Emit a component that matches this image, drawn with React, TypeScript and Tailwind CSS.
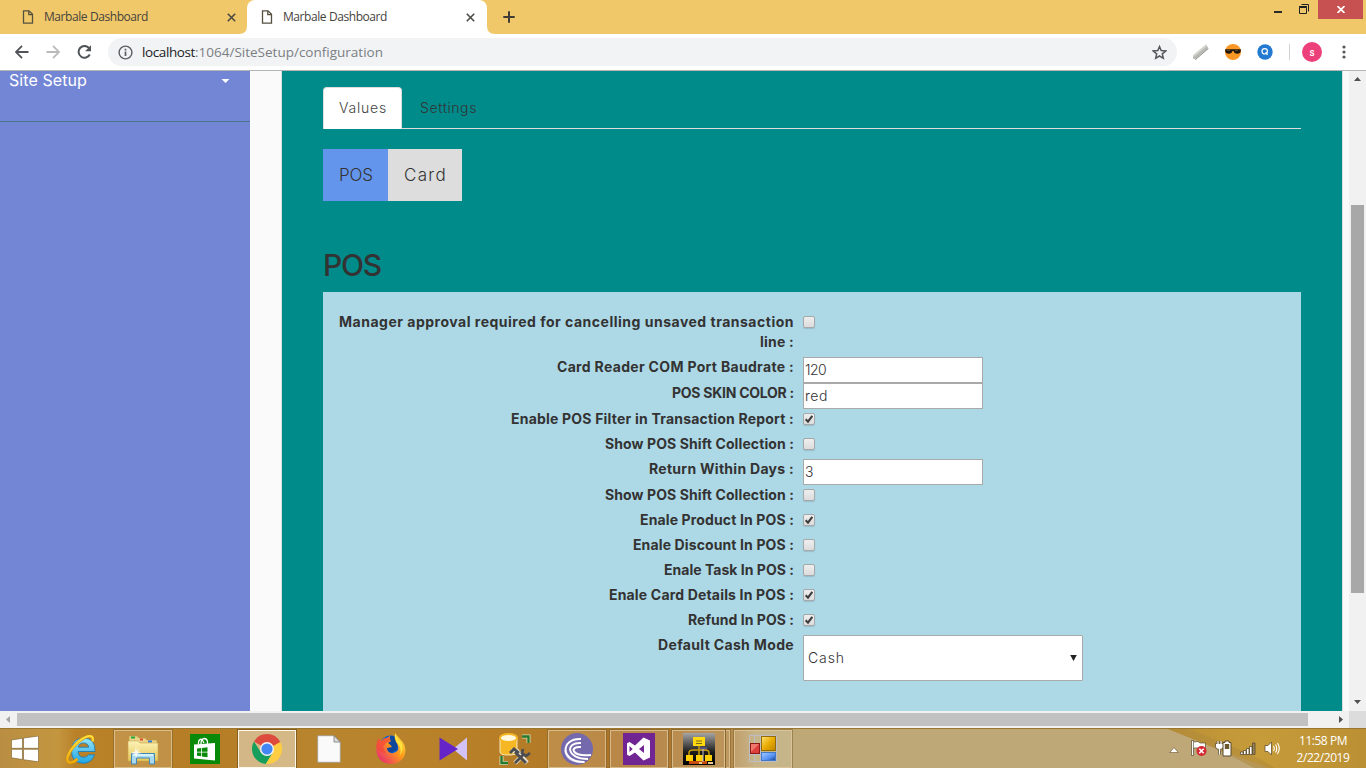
import { useLayoutEffect, useRef, useState } from "react";
import type { ReactNode } from "react";

/** A single line of text whose tracking is adjusted so that it spans `w` pixels. */
function Fit({ w, text, className = "" }: { w: number; text: string; className?: string }) {
  const ref = useRef<HTMLSpanElement>(null);
  const [tracking, setTracking] = useState(0);
  useLayoutEffect(() => {
    const el = ref.current;
    if (el) setTracking((w - el.getBoundingClientRect().width) / text.length);
  }, [w, text]);
  return (
    <span ref={ref} className={`inline-block whitespace-pre ${className}`} style={{ letterSpacing: tracking }}>
      {text}
    </span>
  );
}

function PageIcon() {
  return (
    <svg width="12" height="14" viewBox="0 0 12 14" fill="none" stroke="#54503f" strokeWidth="1.3">
      <path d="M1.5 .8H7L10.5 4.3V13.2H1.5Z" />
      <path d="M6.8 1V4.6H10.4" />
    </svg>
  );
}

function CloseIcon() {
  return (
    <svg width="9" height="9" viewBox="0 0 9 9" stroke="#4b4a45" strokeWidth="1.6">
      <path d="M.8.8 8.2 8.2M8.2.8.8 8.2" />
    </svg>
  );
}

function TabStrip() {
  return (
    <header className="flex h-[34px] shrink-0 bg-[#f0c869] font-['Open_Sans',sans-serif] text-xs text-[#45433c]">
      <div className="flex w-[247px] items-center pl-[22px]">
        <PageIcon />
        <span className="ml-2.5 flex-1"><Fit w={104} text="Marbale Dashboard" /></span>
        <CloseIcon />
        <svg className="ml-[3px] self-end" width="8" height="8" viewBox="0 0 8 8"><path d="M8 0V8H0Q8 8 8 0" fill="#fff" /></svg>
      </div>
      <div className="flex w-60 items-center rounded-t-lg bg-white pl-3.5 pr-3">
        <PageIcon />
        <span className="ml-2.5 flex-1"><Fit w={104} text="Marbale Dashboard" /></span>
        <CloseIcon />
      </div>
      <svg className="self-end" width="8" height="8" viewBox="0 0 8 8"><path d="M0 0V8H8Q0 8 0 0" fill="#fff" /></svg>
      <svg className="ml-2 mt-[11px]" width="12" height="12" viewBox="0 0 12 12" stroke="#3f3d36" strokeWidth="2"><path d="M6 .3V11.7M.3 6H11.7" /></svg>
      <div className="ml-auto flex">
        <svg className="mr-[17px] mt-[11px]" width="8" height="2"><rect width="8" height="2" fill="#2a2a26" /></svg>
        <svg className="mr-[9px] mt-1" width="10" height="10" viewBox="0 0 10 10" fill="none" stroke="#222">
          <path d="M2.5.5H9.5V7.5" /><path d="M.5 3.5H7.5V9.5H.5Z" /><path d="M0 2.7H8" strokeWidth="1.4" />
        </svg>
        <div className="mr-[3px] flex h-[19px] w-[45px] items-center justify-center bg-[#c75050]">
          <svg width="8" height="7" viewBox="0 0 8 7" stroke="#fff" strokeWidth="1.7"><path d="M.5 0 7.5 7M7.5 0 .5 7" /></svg>
        </div>
      </div>
    </header>
  );
}

function Toolbar() {
  return (
    <div className="flex h-[37px] shrink-0 items-center border-b border-[#b4b6b5] bg-white pl-[15px]">
      <svg width="14" height="14" viewBox="0 0 14 14" fill="none" stroke="#505357" strokeWidth="1.8"><path d="M13.5 7H1.2M7 .9.9 7 7 13.1" /></svg>
      <svg className="ml-[17px]" width="14" height="14" viewBox="0 0 14 14" fill="none" stroke="#b8babc" strokeWidth="1.8"><path d="M.5 7H12.8M7 .9 13.1 7 7 13.1" /></svg>
      <svg className="ml-[17px]" width="14" height="14" viewBox="0 0 14 14"><path d="M12.200 9.500A5.900 5.900 0 1 1 11.3 2.900" fill="none" stroke="#505357" strokeWidth="2" transform="translate(.6)" /><path d="M14 .3V6.2H8.100Z" fill="#505357" /></svg>
      <div className="ml-[17px] flex h-7 w-[1069px] items-center rounded-full bg-[#f1f3f4] pl-2.5 pr-[10px]">
        <svg width="15" height="15" viewBox="0 0 15 15" fill="none" stroke="#5b5e62" strokeWidth="1.4"><circle cx="7.5" cy="7.5" r="6.4" /><path d="M7.5 6.5V11M7.5 3.8V5.4" strokeWidth="1.7" /></svg>
        <span className="ml-[9px] flex font-['Open_Sans',sans-serif] text-[13.5px] leading-5">
          <Fit w={53} text="localhost" className="text-[#202124]" />
          <Fit w={188} text=":1064/SiteSetup/configuration" className="text-[#7b7f84]" />
        </span>
        <svg className="ml-auto" width="15" height="15" viewBox="0 0 15 15" fill="none" stroke="#55585c" strokeWidth="1.5"><path d="M7.5 1.6 9.2 5.6 13.7 6 10.3 8.9 11.3 13.3 7.5 11 3.7 13.3 4.7 8.9 1.3 6 5.8 5.6Z" /></svg>
      </div>
      <svg className="ml-[15px]" width="17" height="16" viewBox="0 0 17 16"><path d="M1 11.5 14 .5 16.3 4 3.2 15.2 1 14.5Z" fill="#b9b9b4" /><path d="M1 11.5 14 .5 15 2 1.7 13Z" fill="#d6d6d0" /><path d="M3.2 15.2 16.3 4V5L3.4 16Z" fill="#858580" /></svg>
      <svg className="ml-4" width="16" height="16" viewBox="0 0 16 16"><circle cx="8" cy="8" r="8" fill="#fb9723" /><path d="M.2 5.2H15.8V7Q15.5 9.7 12.2 9.7 9.2 9.7 8.6 7H7.4Q6.8 9.7 3.8 9.7.5 9.7.2 7Z" fill="#20170f" /><path d="M2 6.3H5M10 6.3H13" stroke="#8c643a" strokeWidth=".7" /></svg>
      <svg className="ml-4" width="16" height="16" viewBox="0 0 16 16"><circle cx="8" cy="8" r="7.7" fill="#2479d0" /><circle cx="7.7" cy="7.3" r="2.700" fill="none" stroke="#fff" strokeWidth="1.200" /><path d="M8.6 8.3 10.600 10.800" stroke="#fff" strokeWidth="1.200" /></svg>
      <div className="ml-4 h-4 w-px bg-[#cfd1d4]" />
      <div className="ml-3 flex size-5 items-center justify-center rounded-full bg-[#ec407a] font-['Roboto',sans-serif] text-[10px] font-medium text-white">s</div>
      <svg className="ml-[20px]" width="4" height="14" viewBox="0 0 4 14" fill="#55585c"><circle cx="2" cy="2" r="1.6" /><circle cx="2" cy="7" r="1.6" /><circle cx="2" cy="12" r="1.6" /></svg>
    </div>
  );
}

function Check({ on }: { on: boolean }) {
  return (
    <span className="mt-1 flex size-3 items-center justify-center rounded-[2px] border border-[#a6a8a9] bg-linear-to-b from-[#eeeeee] to-[#dcdcdc] shadow-[0_1px_1px_rgba(0,0,0,0.12)]">
      {on && (
        <svg width="10" height="10" viewBox="0 0 10 10" className="shrink-0"><path d="M1.7 5.3 4 7.7 8.3 1.9" fill="none" stroke="#3c3c3c" strokeWidth="2.1" /></svg>
      )}
    </span>
  );
}

type Row = { label: string; w: number; value: boolean | string };
const rows: Row[] = [
  { label: "Card Reader COM Port Baudrate :", w: 237, value: "120" },
  { label: "POS SKIN COLOR :", w: 122, value: "red" },
  { label: "Enable POS Filter in Transaction Report :", w: 283, value: true },
  { label: "Show POS Shift Collection :", w: 189, value: false },
  { label: "Return Within Days :", w: 145, value: "3" },
  { label: "Show POS Shift Collection :", w: 189, value: false },
  { label: "Enale Product In POS :", w: 154, value: true },
  { label: "Enale Discount In POS :", w: 161, value: false },
  { label: "Enale Task In POS :", w: 130, value: false },
  { label: "Enale Card Details In POS :", w: 185, value: true },
  { label: "Refund In POS :", w: 106, value: true },
];
const valueWidth: Record<string, number> = { "120": 21, red: 23, "3": 8 };

function FormRow({ label, children }: { label: ReactNode; children: ReactNode }) {
  return (
    <div className="flex items-start gap-[9px]">
      <div className="mb-[5px] flex w-[455px] shrink-0 flex-col items-end text-sm font-bold leading-5">{label}</div>
      {children}
    </div>
  );
}

function ConfigForm() {
  return (
    <div className="flex-1 bg-[#add8e6] pl-4 pt-5">
      <FormRow
        label={<><Fit w={455} text="Manager approval required for cancelling unsaved transaction" /><Fit w={34} text="line :" /></>}
      >
        <Check on={false} />
      </FormRow>
      {rows.map((r, i) => (
        <FormRow key={i} label={<Fit w={r.w} text={r.label} />}>
          {typeof r.value === "boolean" ? (
            <Check on={r.value} />
          ) : (
            <div className="h-[26px] w-[180px] border border-[#a9a9a9] bg-white pl-px text-sm font-light leading-6">
              <Fit w={valueWidth[r.value]} text={r.value} />
            </div>
          )}
        </FormRow>
      ))}
      <FormRow label={<Fit w={136} text="Default Cash Mode" />}>
        <div className="flex h-[46px] w-[280px] items-center justify-between rounded-[1px] border border-[#a9a9a9] bg-white pl-1 pr-[5px] text-sm font-light">
          <Fit w={37} text="Cash" />
          <svg width="7" height="6" viewBox="0 0 7 6"><path d="M.2 0H6.8L3.5 6Z" fill="#222" /></svg>
        </div>
      </FormRow>
    </div>
  );
}

function Page() {
  return (
    <div className="flex min-h-0 flex-1 overflow-hidden bg-[#fafafa] font-['Inter',sans-serif] text-[#333]">
      <aside className="w-[250px] shrink-0 bg-[#7386d5] text-white">
        <div className="flex h-[51px] items-start justify-between border-b border-[#47748b] pl-[9px] pr-5 text-base leading-[19px]">
          <Fit w={78} text="Site Setup" />
          <svg className="mt-2" width="9" height="4" viewBox="0 0 9 4"><path d="M.5 0H8.5L4.5 4Z" fill="#fff" /></svg>
        </div>
      </aside>
      <main className="ml-[31px] flex w-[1062px] shrink-0 flex-col border-x border-[#ddd] bg-[#008b8b] pl-[41px] pr-[41px] pt-4">
        <div className="flex h-[42px] shrink-0 border-b border-[#ddd] text-[14px] font-light leading-[41px]">
          <div className="h-[42px] w-[79px] rounded-t border border-b-0 border-[#ddd] bg-white pl-[15px] leading-[39px] text-[#444]"><Fit w={48} text="Values" /></div>
          <div className="pl-[18px]"><Fit w={57} text="Settings" /></div>
        </div>
        <div className="mt-5 flex h-[52px] shrink-0 text-[17px] font-light leading-[52px]">
          <div className="w-[65px] bg-[#6495ed] pl-4"><Fit w={34} text="POS" /></div>
          <div className="w-[74px] bg-[#ddd] pl-4"><Fit w={43} text="Card" /></div>
        </div>
        <h2 className="mt-12 mb-[10px] h-[33px] shrink-0 text-[30px] font-medium leading-[33px]"><Fit w={58} text="POS" /></h2>
        <ConfigForm />
      </main>
      <div className="ml-auto flex w-[17px] shrink-0 flex-col items-center bg-[#f1f1f1] pt-1.5">
        <svg width="7" height="4" viewBox="0 0 7 4"><path d="M3.5 0 7 4H0Z" fill="#505050" /></svg>
        <div className="mt-[124px] h-[388px] w-[13px] bg-[#a8a8a8]" />
        <svg className="mb-[7px] mt-auto" width="7" height="4" viewBox="0 0 7 4"><path d="M3.5 4 7 0H0Z" fill="#505050" /></svg>
      </div>
    </div>
  );
}

function HorizontalBar() {
  return (
    <div className="flex h-[17px] shrink-0 items-center bg-[#f1f1f1] pl-1.5">
      <svg width="4" height="7" viewBox="0 0 4 7"><path d="M0 3.5 4 0V7Z" fill="#a3a3a3" /></svg>
      <div className="ml-[7px] h-[13px] w-[1291px] bg-[#c1c1c1]" />
      <svg className="ml-[31px]" width="4" height="7" viewBox="0 0 4 7"><path d="M4 3.5 0 0V7Z" fill="#505050" /></svg>
      <div className="ml-auto h-full w-[17px] bg-[#dcdcdc]" />
    </div>
  );
}

function IeIcon() {
  return (
    <svg width="32" height="32" viewBox="0 0 32 32">
      <defs>
        <linearGradient id="ie" x2="0" y2="1"><stop stopColor="#95e5fb" /><stop offset="1" stopColor="#20a5e2" /></linearGradient>
        <linearGradient id="ring" x2="0" y2="1"><stop stopColor="#ffdf3a" /><stop offset="1" stopColor="#efad0c" /></linearGradient>
      </defs>
      <path d="M30 18.500H13Q13.500 24.300 18.500 24.300 22 24.300 23.600 21.800H29.500Q26.500 30.300 18.300 30.300 6.500 30 6.500 17.500 7 5.300 18.500 5 30.500 5.300 30 18.500ZM13.200 14.200H23.800Q23 10 18.400 10 14.100 10 13.200 14.200Z" fill="url(#ie)" stroke="#1778b5" strokeWidth=".8" />
      <path d="M27.500 8.500C29.500 1.500 23 1.500 15 7.500 5 15.500 0 26 3.300 29 5.500 30.500 9.500 28.500 12.500 26" fill="none" stroke="#c4870c" strokeWidth="3.200" />
      <path d="M27.500 8.500C29.500 1.500 23 1.500 15 7.500 5 15.500 0 26 3.300 29 5.500 30.500 9.500 28.500 12.500 26" fill="none" stroke="url(#ring)" strokeWidth="2.300" />
    </svg>
  );
}

function ExplorerIcon() {
  return (
    <svg width="34" height="32" viewBox="0 0 34 32">
      <defs><linearGradient id="folder" x2="0" y2="1"><stop stopColor="#fdf3b8" /><stop offset="1" stopColor="#e6c858" /></linearGradient></defs>
      <path d="M3 3H11L13 5H19L21 7H31V18H3Z" fill="#ead388" stroke="#b9973f" strokeWidth=".6" />
      <path d="M5 4.500H9" stroke="#1ea83d" strokeWidth="2" /><path d="M14 6.500H17" stroke="#e04a32" strokeWidth="2" /><path d="M22 8.500H26" stroke="#2f7bd8" strokeWidth="2" />
      <path d="M2 8H12L14 10H32V28H2Z" fill="url(#folder)" stroke="#c6a548" strokeWidth=".6" />
      <path d="M5.500 20.500H28.500V31H23.500V25H10.500V31H5.500Z" fill="#a9daee" stroke="#4287b5" />
      <path d="M7 22H27" stroke="#e2f7fd" strokeWidth="1.500" />
      <path d="M10 13 10.800 18 14 15 11.800 19 16 20 11.500 20.700 10 25 9 21 5 20 9 18.500Z" fill="#fff" opacity=".85" />
    </svg>
  );
}

function StoreIcon() {
  return (
    <svg width="30" height="30" viewBox="0 0 30 30">
      <rect width="30" height="30" fill="#088a08" />
      <path d="M4 10.500 25 9V26.500L4 24.500Z" fill="#fff" />
      <path d="M8.500 10V8Q9.500 4.500 12 5.500L14 9M11 10Q11 4.500 14.500 4.500 18 5 17.500 10" fill="none" stroke="#fff" strokeWidth="1.300" />
      <path d="M7 14.500 11.200 14V17.700H7ZM12 13.900 17.500 13.200V17.700H12ZM7 18.500H11.200V22.300L7 21.800ZM12 18.500H17.500V23.200L12 22.500Z" fill="#088a08" />
    </svg>
  );
}

function ChromeIcon() {
  return (
    <svg width="30" height="30" viewBox="0 0 30 30">
      <path d="M15 15 2 7.500A15 15 0 0 1 28.200 8H15Z" fill="#dd4b3e" />
      <path d="M2 7.500A15 15 0 0 0 13.800 30L21 18.500 9 18.500Z" fill="#169f5c" />
      <path d="M28.200 8A15 15 0 0 1 13.800 30L21.200 18 19 8Z" fill="#fecd42" />
      <path d="M15 8H28.200L21 12Z" fill="#dd4b3e" />
      <circle cx="15" cy="15" r="7" fill="#f3f3f3" /><circle cx="15" cy="15" r="5.600" fill="#4387f5" />
    </svg>
  );
}

function DocIcon() {
  return (
    <svg width="24" height="28" viewBox="0 0 24 28"><path d="M.7.700H17L23.300 7V27.300H.7Z" fill="#fafafa" stroke="#9f9b93" strokeWidth=".8" /><path d="M17 .700V7H23.300Z" fill="#ddd" stroke="#777" strokeWidth=".8" /></svg>
  );
}

function FirefoxIcon() {
  return (
    <svg width="30" height="31" viewBox="0 0 30 31">
      <defs>
        <linearGradient id="fox" x1="1" x2="0" y2="1"><stop stopColor="#fff04a" /><stop offset=".45" stopColor="#ff9818" /><stop offset="1" stopColor="#e31587" /></linearGradient>
      </defs>
      <circle cx="15" cy="14" r="11.500" fill="#075fd8" />
      <path d="M12 4Q17 1 22 7L21 17 14 20 9 14Z" fill="#16305f" opacity=".5" />
      <path d="M3 5 5 8Q8 5 11 5L14 3Q13 6 15 8L12 10Q15 12 16 14L11 15Q11 19 15 20 19 21 22 17 23 13 20 9 18 5 19 0 23 5 25 7 29 11 29.500 17 29 29 16 31 3 31 .500 19 0 11 3 5Z" fill="url(#fox)" />
      <path d="M1 17Q-1 9 3 5L5 8Q8 5 11 5L14 3Q13 6 15 8L10 10 7 14 10 21Z" fill="#f3443c" opacity=".7" />
      <path d="M19 0Q20 5 25 9 29 17 23 24 27 17 22 11 18 6 19 0Z" fill="#ffe33f" />
    </svg>
  );
}

function PlayerIcon() {
  return (
    <svg width="28" height="24" viewBox="0 0 28 24"><path d="M28 .5V23.500L14 12Z" fill="#d2c2f5" /><path d="M.5.500 19 12 .5 23.500Z" fill="#6424c8" /></svg>
  );
}

function DatabaseIcon() {
  return (
    <svg width="32" height="32" viewBox="0 0 32 32">
      <path d="M1 5V19Q1 22 9.500 22 18 22 18 19V5Z" fill="#f5b824" stroke="#f8e6bb" />
      <ellipse cx="9.500" cy="5" rx="8.500" ry="4" fill="#fff7de" stroke="#f5b824" strokeWidth="1.800" />
      <path d="M23 3.500H29.500V10" fill="none" stroke="#d8d7af" strokeWidth="4" /><path d="M23 3.500H29.500V10" fill="none" stroke="#25792c" strokeWidth="2.300" />
      <path d="M2.500 23V30H9" fill="none" stroke="#d8d7af" strokeWidth="4" /><path d="M2.500 23V30H9" fill="none" stroke="#25792c" strokeWidth="2.300" />
      <g fill="none" stroke="#e8dfcc" strokeWidth="4.500"><path d="M12 18 18 18 28 30M16 30 24 22" /></g>
      <g fill="none" stroke="#4b4d50" strokeWidth="2.800"><path d="M11 20 15 16 20 20M16 19 27 30M16 30 25 21M24 16 23 20 27 23 31 20" /></g>
    </svg>
  );
}

function TorrentIcon() {
  return (
    <svg width="32" height="32" viewBox="0 0 32 32" fill="none">
      <circle cx="16" cy="16" r="16" fill="#7469ad" />
      <g stroke="#fff" strokeWidth="1.900"><path d="M20 6C-1 5-1 29 23 29" /><path d="M20 10C4 9 5 26 27 26" /><path d="M20 14C8 13 10 24 30 22" /><path d="M24 29Q6 30 4 17" opacity=".6" /></g>
    </svg>
  );
}

function StudioIcon() {
  return (
    <svg width="32" height="32" viewBox="0 0 32 32"><rect width="32" height="32" fill="#702593" /><path fillRule="evenodd" d="M20.500 4.500 27 7.500V24.500L20.500 27.500 12 19.500 6.500 23 4 21.700V10.300L6.500 9 12 12.500ZM21 12 16 16 21 20ZM6.500 13V19L9.700 16Z" fill="#fff" /></svg>
  );
}

function NetworkIcon() {
  return (
    <svg width="32" height="32" viewBox="0 0 32 32">
      <defs><linearGradient id="net" x2="0" y2="1"><stop stopColor="#a5a5a5" /><stop offset=".6" stopColor="#1a1a1a" /><stop offset="1" /></linearGradient></defs>
      <rect width="32" height="32" fill="url(#net)" />
      <path d="M17 14H24V18H17Z" fill="#57527e" />
      <path d="M16 13V22M6 22V20Q6 17 10 17H22Q26 17 26 20V22" fill="none" stroke="#c79c0d" strokeWidth="1.500" />
      <rect x="10" y="4" width="12" height="9" fill="#ffd810" /><path d="M13 8H19M13 10.500H19" stroke="#776a1b" />
      <path d="M6 28H24V31H6Z" fill="#c84c10" />
      <path d="M3 22H10V28H3ZM13 22H20V28H13ZM22 22H29V28H22Z" fill="#ffcf05" />
      <path d="M20 16V29" stroke="#c9c1c6" /><path d="M16 30H19M25 30H30" stroke="#e8ce8c" strokeWidth="2" />
    </svg>
  );
}

function FormsIcon() {
  return (
    <svg width="28" height="27" viewBox="0 0 28 27">
      <defs>
        <linearGradient id="gold" x2="1" y2="1"><stop stopColor="#ffe475" /><stop offset=".5" stopColor="#eaac04" /><stop offset="1" stopColor="#bd8500" /></linearGradient>
        <linearGradient id="blue" x2="1" y2="1"><stop stopColor="#a5cbff" /><stop offset=".6" stopColor="#5592f4" /><stop offset="1" stopColor="#173f91" /></linearGradient>
      </defs>
      <path d="M.5.500H27.500V26.500H.5ZM5.500 0V8M5.500 19V27M11.500 0V27M0 19.500H12" fill="none" stroke="#bdbdc6" />
      <rect x="12.500" y="1.500" width="14" height="14" fill="url(#gold)" stroke="#936b00" />
      <rect x="1.500" y="8.500" width="9" height="10" fill="#dc3f3a" stroke="#8e1717" /><path d="M2 9H10L2 17Z" fill="#f58e82" opacity=".7" />
      <rect x="12.500" y="17.500" width="14" height="8" fill="url(#blue)" stroke="#4377c8" />
    </svg>
  );
}

type Task = { icon: ReactNode; state?: "open" | "active"; stacked?: boolean };
const tasks: Task[] = [
  { icon: <IeIcon /> },
  { icon: <ExplorerIcon />, state: "open" },
  { icon: <StoreIcon /> },
  { icon: <ChromeIcon />, state: "active" },
  { icon: <DocIcon /> },
  { icon: <FirefoxIcon /> },
  { icon: <PlayerIcon /> },
  { icon: <DatabaseIcon /> },
  { icon: <TorrentIcon />, state: "open" },
  { icon: <StudioIcon />, state: "open" },
  { icon: <NetworkIcon />, state: "open", stacked: true },
  { icon: <FormsIcon />, state: "open" },
];

const stateClass = {
  open: "border-[#e0c79a]/80 bg-white/15 outline-[#7c5d2b]/50",
  active: "border-[#fff8e8] bg-[#e0ceae]/70 outline-[#6d4f20]/70",
};

function TaskButton({ icon, state, stacked }: Task) {
  return (
    <div className="flex w-[62px] items-center justify-center">
      <div className={`flex h-[38px] items-center justify-center ${stacked ? "w-[53px]" : "w-[58px]"} ${state ? `border outline ${stateClass[state]}` : ""}`}>{icon}</div>
      {stacked && <div className="ml-px h-[38px] w-1 border-y border-r border-[#e0c79a]/80 bg-white/15 outline outline-[#7c5d2b]/50" />}
    </div>
  );
}

function Tray() {
  return (
    <div className="ml-auto flex items-center">
      <svg className="mt-0.5" width="10" height="6" viewBox="0 0 10 6"><path d="M5 .5 9.300 5.500H.7Z" fill="#fff" stroke="#66512d" strokeWidth=".6" /></svg>
      <svg className="ml-3" width="16" height="17" viewBox="0 0 16 17">
        <path d="M1.500.500V15.500" stroke="#514226" strokeWidth="3" /><path d="M2.500 2 7 1.500 9 3H14.500V9L8.500 9.500 6.500 8H2.500Z" fill="#fff" stroke="#594a2c" strokeWidth=".7" /><path d="M1.500 1V15" stroke="#fff" strokeWidth="1.500" />
        <circle cx="10.500" cy="11" r="5" fill="#d62631" /><path d="M8.300 8.800 12.700 13.200M12.700 8.800 8.300 13.200" stroke="#fff" strokeWidth="1.600" />
      </svg>
      <svg className="ml-2" width="17" height="17" viewBox="0 0 17 17">
        <g fill="none" stroke="#594a2c" strokeWidth="2.600"><path d="M3 1V4M6 1V4M4.500 8V14.500" /></g>
        <path d="M.5 3.500H8.500V7Q8 9.500 4.500 9.500 1 9.500.5 7Z" fill="#fff" stroke="#594a2c" strokeWidth=".8" />
        <path d="M3 1V4M6 1V4M4.500 8.500V14.500" stroke="#fff" strokeWidth="1.200" />
        <path d="M8 2.500H10V1H14V2.500H16V16H8Z" fill="#fff" stroke="#594a2c" /><path d="M9.800 4H14.200V9H9.800Z" fill="#6b552d" />
      </svg>
      <svg className="ml-2" width="16" height="13" viewBox="0 0 16 13" fill="#fff" stroke="#594a2c" strokeWidth=".8"><path d="M.5 10H3V12.500H.5ZM3.500 8.500H6V12.500H3.500ZM6.500 6.500H9V12.500H6.500ZM9.500 4.500H12V12.500H9.500Z" /><path d="M12.500 1H15V12.500H12.500Z" fill="#93835f" /></svg>
      <svg className="ml-2" width="17" height="15" viewBox="0 0 17 15" fill="none"><path d="M1 4.500H4L7.500 1V14L4 10.500H1Z" fill="#fff" stroke="#665230" strokeWidth=".8" /><path d="M9.500 5Q11 7.500 9.500 10M11.500 3.500Q14 7.500 11.500 11.500M13.500 2Q17 7.500 13.500 13" stroke="#fff" strokeWidth="1.100" /></svg>
      <div className="ml-4 mr-[17px] flex w-[52px] flex-col items-center pt-px font-['Open_Sans',sans-serif] text-xs leading-[17px] text-white">
        <Fit w={48} text="11:58 PM" />
        <Fit w={53} text="2/22/2019" />
      </div>
    </div>
  );
}

function Taskbar() {
  return (
    <footer className="relative flex h-10 shrink-0 border-t border-[#9b762f] bg-[linear-gradient(90deg,#b98e43_0px,#c3963f_58px,#b98128_76px,#b57d25_200px,#b8852e_330px,#b77e27_500px,#ab722a_640px,#b1813d_722px,#bea876_756px,#bfa878_1140px,#bea574_1366px)]">
      <svg className="absolute inset-0" width="1366" height="39" viewBox="0 0 1366 39">
        <defs><linearGradient id="petal" x2="1" y2="0"><stop stopColor="#b98f35" /><stop offset=".45" stopColor="#c69c3a" /><stop offset="1" stopColor="#bb9034" /></linearGradient></defs>
        <path d="M1168 0H1366V39H1268Q1222 22 1168 0Z" fill="url(#petal)" /><path d="M1168 0H1188Q1255 25 1275 39H1254Q1220 20 1168 0Z" fill="#b08a3c" opacity=".55" />
      </svg>
      <div className="relative flex w-full">
        <div className="flex w-[50px] items-center justify-center">
          <svg width="28" height="26" viewBox="0 0 28 26" fill="#fff" stroke="#795d29" strokeWidth=".6"><path d="M.5 4 11.500 2.300V12.300H.5ZM12.500 2.100 27.500 0V12.300H12.500ZM.5 13.300H11.500V23.500L.5 21.800ZM12.500 13.300H27.500V25.800L12.500 23.700Z" /></svg>
        </div>
        {tasks.map((t, i) => (
          <TaskButton key={i} {...t} />
        ))}
        <Tray />
      </div>
    </footer>
  );
}

export default function App() {
  return (
    <div className="flex h-[768px] w-[1366px] flex-col overflow-hidden">
      <TabStrip />
      <Toolbar />
      <Page />
      <HorizontalBar />
      <Taskbar />
    </div>
  );
}
